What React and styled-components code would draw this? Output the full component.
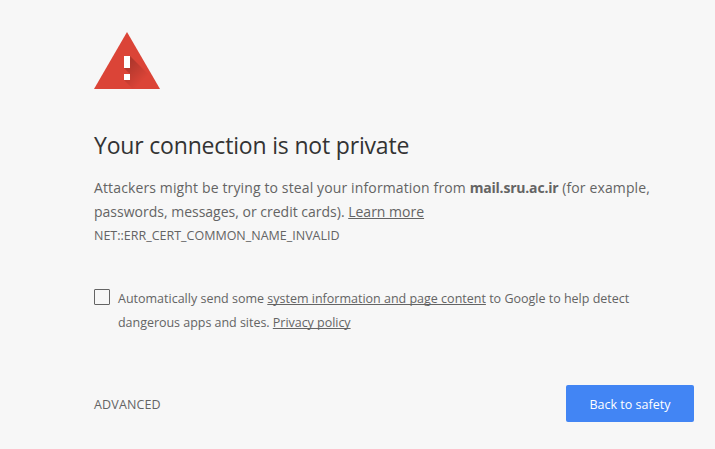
import React from "react";
import styled, { createGlobalStyle } from "styled-components";

const Colors = {
  background: "#f7f7f7",
  heading: "#333",
  text: "#646464",
  danger: "#db4437",
  primary: "#4285f4",
};

const App = () => {
  return (
    <>
      <GlobalStyle/>
      <Interstitial>
        <WarningIcon viewBox="0 0 66 57" aria-hidden="true">
          <defs>
            <linearGradient id="shade" gradientUnits="userSpaceOnUse" x1="33" y1="33" x2="49" y2="49">
              <stop offset="0" stopColor="#000" stopOpacity="0.2"/>
              <stop offset="1" stopColor="#000" stopOpacity="0"/>
            </linearGradient>
          </defs>
          <path d="M33 0L66 57H0Z" fill={Colors.danger}/>
          <path d="M36 24L62 50L66 57H39L30 48L36 42L30 36Z" fill="url(#shade)"/>
          <path d="M30 24H36V36H30ZM30 42H36V48H30Z" fill="#fff"/>
        </WarningIcon>

        <Title>Your connection is not private</Title>

        <Message>
          <Line $tracking="0.13px">
            Attackers might be trying to steal your information from <Host>mail.sru.ac.ir</Host> (for example,
          </Line>
          <Line>
            passwords, messages, or credit cards). <Link href="#">Learn more</Link>
          </Line>
        </Message>
        <ErrorCode>NET::ERR_CERT_COMMON_NAME_INVALID</ErrorCode>

        <OptIn>
          <Checkbox type="checkbox"/>
          <OptInText>
            <Line>
              Automatically send some <Link href="#">system information and page content</Link> to Google to help detect
            </Line>
            <Line $tracking="-0.03px">
              dangerous apps and sites. <Link href="#">Privacy policy</Link>
            </Line>
          </OptInText>
        </OptIn>

        <Actions>
          <AdvancedButton>ADVANCED</AdvancedButton>
          <SafetyButton>Back to safety</SafetyButton>
        </Actions>
      </Interstitial>
    </>
  )
}

export default App;

const GlobalStyle = createGlobalStyle`
  body {
    margin: 0;
    background: ${Colors.background};
    color: ${Colors.text};
    font-family: "Open Sans", "Noto Sans", sans-serif;
    font-size: 14px;
    overflow: hidden;
  }
`

const Interstitial = styled.main`
  box-sizing: border-box;
  width: 600px;
  height: 449px;
  margin-left: 94px;
  padding-top: 32px;
`

const WarningIcon = styled.svg`
  display: block;
  width: 66px;
  height: 57px;
`

const Title = styled.h1`
  margin: 40px 0 0;
  color: ${Colors.heading};
  font-size: 23px;
  font-weight: 400;
  line-height: 32px;
  letter-spacing: -0.18px;
  white-space: nowrap;
`

const Message = styled.div`
  margin-top: 15px;
  font-size: 14px;
  line-height: 24px;
`

const Line = styled.div`
  letter-spacing: ${({$tracking}) => $tracking || "0"};
  white-space: nowrap;
`

const Host = styled.strong`
  letter-spacing: -0.2px;
`

const Link = styled.a`
  color: inherit;
  text-decoration: underline;
  text-decoration-skip-ink: none;
`

const ErrorCode = styled.div`
  font-size: 12.5px;
  line-height: 24px;
`

const OptIn = styled.div`
  display: flex;
  margin-top: 39px;
`

const Checkbox = styled.input`
  appearance: none;
  box-sizing: border-box;
  flex: none;
  width: 16px;
  height: 16px;
  margin: 2px 8px 0 0;
  border: 1px solid ${Colors.text};
  border-radius: 1px;
`

const OptInText = styled.div`
  font-size: 12.5px;
  line-height: 24px;
`

const Actions = styled.div`
  display: flex;
  align-items: center;
  justify-content: space-between;
  margin-top: 50px;
`

const Button = styled.button`
  box-sizing: border-box;
  height: 37px;
  padding: 2px 0 0;
  border: 0;
  background: none;
  color: inherit;
  font: inherit;
  font-size: 12.5px;
  line-height: 35px;
`

const AdvancedButton = styled(Button)`
  letter-spacing: 0.15px;
`

const SafetyButton = styled(Button)`
  width: 128px;
  border-radius: 2px;
  background: ${Colors.primary};
  color: #fff;
`
